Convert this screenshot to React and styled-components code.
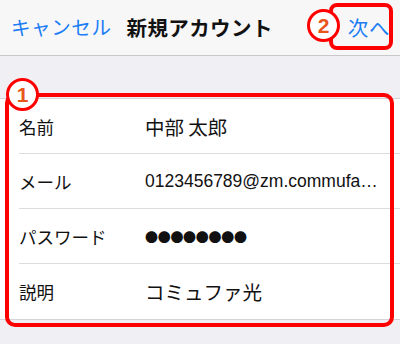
import styled, { createGlobalStyle } from 'styled-components';

const GlobalStyle = createGlobalStyle`
  html, body {
    margin: 0;
    padding: 0;
    background: #efeff4;
  }
  body {
    font-family: "Noto Sans CJK JP", "Liberation Sans", sans-serif;
  }
`;

const Page = styled.div`
  position: relative;
  width: 400px;
  height: 344px;
  overflow: hidden;
  background: #efeff4;
`;

const NavBar = styled.header`
  height: 56px;
  box-sizing: border-box;
  display: flex;
  align-items: center;
  padding: 0 10px 2px 11px;
  background: #f7f7f8;
  border-bottom: 1px solid #c8c7cc;
`;

const NavButton = styled.span`
  color: #1b7df5;
  font-size: ${(p) => p.$size || 19.5}px;
  letter-spacing: 0.6px;
  margin-left: ${(p) => (p.$right ? 'auto' : '0')};
`;

const Title = styled.h1`
  margin: 0 0 0 15px;
  font-size: 20.5px;
  font-weight: 700;
  color: #111;
  letter-spacing: 0.4px;
`;

const FormList = styled.section`
  margin-top: 42px;
  background: #fff;
  border-top: 1px solid #d4d4d8;
  border-bottom: 1px solid #d4d4d8;
`;

const Row = styled.div`
  height: 55px;
  box-sizing: border-box;
  margin-left: 19px;
  display: flex;
  align-items: center;
  border-bottom: ${(p) => (p.$last ? 'none' : '1px solid #dcdcdf')};
`;

const Label = styled.span`
  width: 126px;
  flex-shrink: 0;
  font-size: 17.5px;
  color: #111;
`;

const Value = styled.span`
  flex: 1;
  min-width: 0;
  padding-right: 20px;
  font-family: ${(p) => (p.$latin ? '"Liberation Sans", sans-serif' : '"Noto Sans CJK JP", sans-serif')};
  font-size: ${(p) => p.$size || 19.5}px;
  letter-spacing: ${(p) => p.$spacing || 0}px;
  color: #111;
  white-space: nowrap;
  overflow: hidden;
  text-overflow: ellipsis;
`;

const Callout = styled.div`
  position: absolute;
  box-sizing: border-box;
  border: 4px solid #ff0000;
  border-radius: ${(p) => p.$radius}px;
`;

const Badge = styled.div`
  position: absolute;
  width: 33px;
  height: 33px;
  box-sizing: border-box;
  border: 3px solid #ff0000;
  border-radius: 50%;
  background: #fff;
  display: flex;
  align-items: center;
  justify-content: center;
  color: #e8561c;
  font-family: "Liberation Sans", sans-serif;
  font-weight: 700;
  font-size: 21px;
  line-height: 1;
`;

export default function App() {
  return (
    <>
      <GlobalStyle />
      <Page>
        <NavBar>
          <NavButton>キャンセル</NavButton>
          <Title>新規アカウント</Title>
          <NavButton $right $size={20.5}>次へ</NavButton>
        </NavBar>

        <FormList>
          <Row>
            <Label>名前</Label>
            <Value>中部 太郎</Value>
          </Row>
          <Row>
            <Label>メール</Label>
            <Value $latin $size={17.5}>0123456789@zm.commufa…</Value>
          </Row>
          <Row>
            <Label>パスワード</Label>
            <Value $size={13} $spacing={-0.3}>●●●●●●●●</Value>
          </Row>
          <Row $last>
            <Label>説明</Label>
            <Value>コミュファ光</Value>
          </Row>
        </FormList>

        <Callout $radius={10} style={{ left: 5, top: 93, width: 389, height: 234 }} />
        <Badge style={{ left: 6, top: 78 }}>1</Badge>

        <Callout $radius={8} style={{ left: 329, top: 3, width: 64, height: 47 }} />
        <Badge style={{ left: 307, top: 9 }}>2</Badge>
      </Page>
    </>
  );
}
